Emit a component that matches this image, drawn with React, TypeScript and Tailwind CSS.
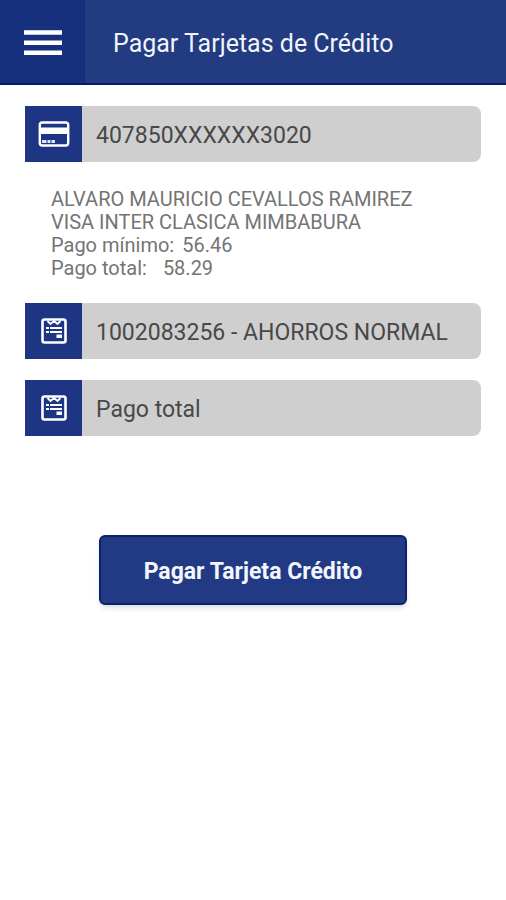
import { useState } from "react";
import type { ReactNode } from "react";

type FieldProps = {
  label: string;
  value: string;
  icon: ReactNode;
};

function CardIcon() {
  return (
    <svg width="32" height="26" viewBox="0 0 32 26" fill="none" aria-hidden="true">
      <rect x="1.8" y="1.5" width="28.4" height="23" rx="2.5" stroke="#fff" strokeWidth="2.4" />
      <path d="M2 6.5H30V13H2Z" fill="#fff" />
      <path d="M4 20.5H8.5M9.5 20.5H12.5M13.5 20.5H17" stroke="#dfe6fb" strokeWidth="3" />
    </svg>
  );
}

function BillIcon() {
  return (
    <svg width="26" height="26" viewBox="0 0 26 26" fill="none" aria-hidden="true">
      <rect x="1.5" y="1.5" width="23" height="23" rx="2" stroke="#fff" strokeWidth="2.6" />
      <path d="M6.5 3L9.5 6L13 3L16.5 6L19.5 3" stroke="#fff" strokeWidth="2" />
      <path d="M5 10H8M9 10H21M5 14H8M9 14H21" stroke="#fff" strokeWidth="2.2" />
      <path d="M15.5 16.5H21V20H15.5Z" fill="#fff" />
    </svg>
  );
}

function Field({ label, value, icon }: FieldProps) {
  return (
    <button
      type="button"
      aria-label={`${label}: ${value}`}
      className="flex h-14 w-full overflow-hidden rounded-r-lg bg-[#cfcfcf] text-left"
    >
      <span className="flex h-full w-[57px] shrink-0 items-center justify-center bg-[#1d3583]">
        {icon}
      </span>
      <span className="self-center truncate pt-1 pl-3.5 text-[23px] leading-7 text-[#484848]">
        {value}
      </span>
    </button>
  );
}

export default function App() {
  const [menuOpen, setMenuOpen] = useState(false);

  return (
    <div className="min-h-screen bg-white font-['Roboto',sans-serif]">
      {/* Header */}
      <header className="flex h-[85px] border-b-2 border-[#041c6c] bg-[#233b80]">
        <button
          type="button"
          aria-label="Menú"
          aria-expanded={menuOpen}
          onClick={() => setMenuOpen(!menuOpen)}
          className="flex w-[85px] shrink-0 items-center justify-center bg-[#16307d]"
        >
          <svg width="38" height="26" viewBox="0 0 38 26" aria-hidden="true">
            <path d="M0 3.5H38M0 13.7H38M0 23.7H38" stroke="#fff" strokeWidth="4.6" />
          </svg>
        </button>
        <h1 className="self-center pt-1 pl-7 text-[25px] leading-8 text-[#f1f4fb]">
          Pagar Tarjetas de Crédito
        </h1>
      </header>

      <main className="px-[25px] pt-[21px]">
        <Field label="Tarjeta" value="407850XXXXXX3020" icon={<CardIcon />} />

        {/* Card details */}
        <div className="px-[26px] pt-[26px] pb-[23px] text-xl leading-[23px] text-[#747474]">
          <p>ALVARO MAURICIO CEVALLOS RAMIREZ</p>
          <p>VISA INTER CLASICA MIMBABURA</p>
          <p className="flex gap-2">
            <span>Pago mínimo:</span>
            <span>56.46</span>
          </p>
          <p className="flex gap-4">
            <span>Pago total:</span>
            <span>58.29</span>
          </p>
        </div>

        <div className="flex flex-col gap-[21px]">
          <Field label="Cuenta" value="1002083256 - AHORROS NORMAL" icon={<BillIcon />} />
          <Field label="Tipo de pago" value="Pago total" icon={<BillIcon />} />
        </div>

        {/* Submit */}
        <div className="px-[74px] pt-[99px]">
          <button
            type="button"
            className="h-[70px] w-full rounded-md border-2 border-[#0a2270] bg-[#213a83] pt-1 text-[23px] font-bold text-[#f3f6fd] shadow-md"
          >
            Pagar Tarjeta Crédito
          </button>
        </div>
      </main>
    </div>
  );
}
